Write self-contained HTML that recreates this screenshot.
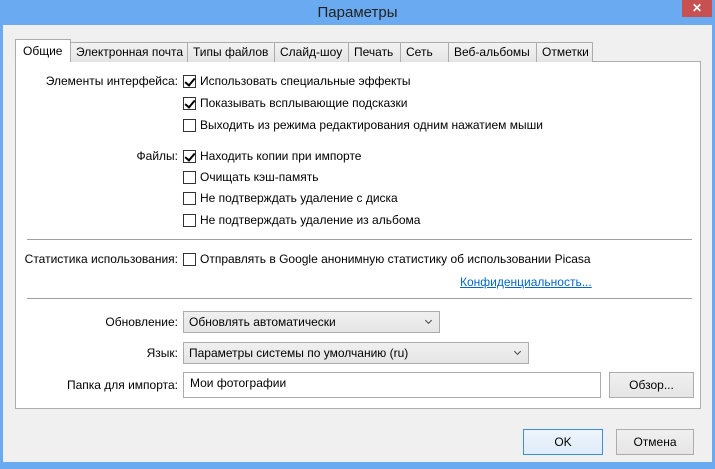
<!DOCTYPE html><html><head><meta charset="utf-8"><style>
*{margin:0;padding:0;box-sizing:border-box}
body{width:715px;height:469px;background:#6aaaf0;font-family:"Liberation Sans",sans-serif;font-size:12px;color:#000;position:relative;overflow:hidden}
.a{position:absolute}
.title{left:0;top:4px;width:715px;text-align:center;font-size:15px;color:#222}
.close{left:682px;top:0;width:30px;height:17px;background:#c75050;color:#fff;text-align:center;font-size:12px;line-height:17px;font-weight:bold}
.client{left:3px;top:25px;width:709px;height:437px;background:#f0f0f0}
.panel{left:15px;top:61px;width:686px;height:348px;background:#fff;border:1px solid #adadad}
.tab{top:42px;height:20px;background:linear-gradient(#f3f3f3,#e4e4e4);border:1px solid #acacac;border-bottom:none;line-height:18px;padding-left:5px;white-space:nowrap}
.tab.sel{top:39px;height:23px;background:#fff;line-height:22px;padding-left:7px;z-index:2}
.cb{left:183px;width:13px;height:13px;border:1px solid #333;background:#fff}
.cb.c::after{content:"";position:absolute;left:3px;top:0px;width:4px;height:8px;border:solid #000;border-width:0 2px 2px 0;transform:rotate(40deg)}
.t{left:200px;white-space:nowrap}
.l{right:537px;white-space:nowrap;text-align:right}
.sep{left:27px;width:665px;height:1px;background:#a0a0a0}
.dd{height:22px;border:1px solid #acacac;background:linear-gradient(#f0f0f0,#e5e5e5);padding:3px 5px;white-space:nowrap}
.dd::after{content:"";position:absolute;right:8px;top:6px;width:4px;height:4px;border:solid #444;border-width:0 1.5px 1.5px 0;transform:rotate(45deg)}
.btn{height:26px;border:1px solid #acacac;background:linear-gradient(#f0f0f0,#e5e5e5);text-align:center;line-height:24px}
</style></head><body>
<div class="a title">Параметры</div>
<div class="a close">✕</div>
<div class="a client"></div>
<div class="a panel"></div>
<div class="a tab sel" style="left:15px;width:56px">Общие</div>
<div class="a tab" style="left:70px;width:118px">Электронная почта</div>
<div class="a tab" style="left:187px;width:88px">Типы файлов</div>
<div class="a tab" style="left:274px;width:75px">Слайд-шоу</div>
<div class="a tab" style="left:348px;width:53px">Печать</div>
<div class="a tab" style="left:400px;width:49px">Сеть</div>
<div class="a tab" style="left:448px;width:89px">Веб-альбомы</div>
<div class="a tab" style="left:536px;width:57px">Отметки</div>

<div class="a l" style="top:74px">Элементы интерфейса:</div>
<div class="a cb c" style="top:75px"></div><div class="a t" style="top:74px">Использовать специальные эффекты</div>
<div class="a cb c" style="top:97px"></div><div class="a t" style="top:96px">Показывать всплывающие подсказки</div>
<div class="a cb" style="top:119px"></div><div class="a t" style="top:118px">Выходить из режима редактирования одним нажатием мыши</div>
<div class="a l" style="top:149px">Файлы:</div>
<div class="a cb c" style="top:150px"></div><div class="a t" style="top:149px">Находить копии при импорте</div>
<div class="a cb" style="top:171px"></div><div class="a t" style="top:170px">Очищать кэш-память</div>
<div class="a cb" style="top:192px"></div><div class="a t" style="top:191px">Не подтверждать удаление с диска</div>
<div class="a cb" style="top:214px"></div><div class="a t" style="top:213px">Не подтверждать удаление из альбома</div>
<div class="a sep" style="top:239px"></div>
<div class="a l" style="top:252px">Статистика использования:</div>
<div class="a cb" style="top:253px"></div><div class="a t" style="top:252px">Отправлять в Google анонимную статистику об использовании Picasa</div>
<div class="a" style="left:460px;top:275px;color:#0066cc;text-decoration:underline">Конфиденциальность...</div>
<div class="a sep" style="top:298px"></div>
<div class="a l" style="top:315px">Обновление:</div>
<div class="a dd" style="left:183px;top:311px;width:257px">Обновлять автоматически</div>
<div class="a l" style="top:346px">Язык:</div>
<div class="a dd" style="left:183px;top:342px;width:346px">Параметры системы по умолчанию (ru)</div>
<div class="a l" style="top:378px">Папка для импорта:</div>
<div class="a" style="left:183px;top:372px;width:418px;height:26px;border:1px solid #acacac;background:#fff;padding:3px 6px">Мои фотографии</div>
<div class="a btn" style="left:609px;top:372px;width:85px">Обзор...</div>
<div class="a btn" style="left:523px;top:429px;width:80px;border-color:#3c8fe0;background:linear-gradient(#eef5fc,#dfecf9)">OK</div>
<div class="a btn" style="left:616px;top:429px;width:78px">Отмена</div>
</body></html>
